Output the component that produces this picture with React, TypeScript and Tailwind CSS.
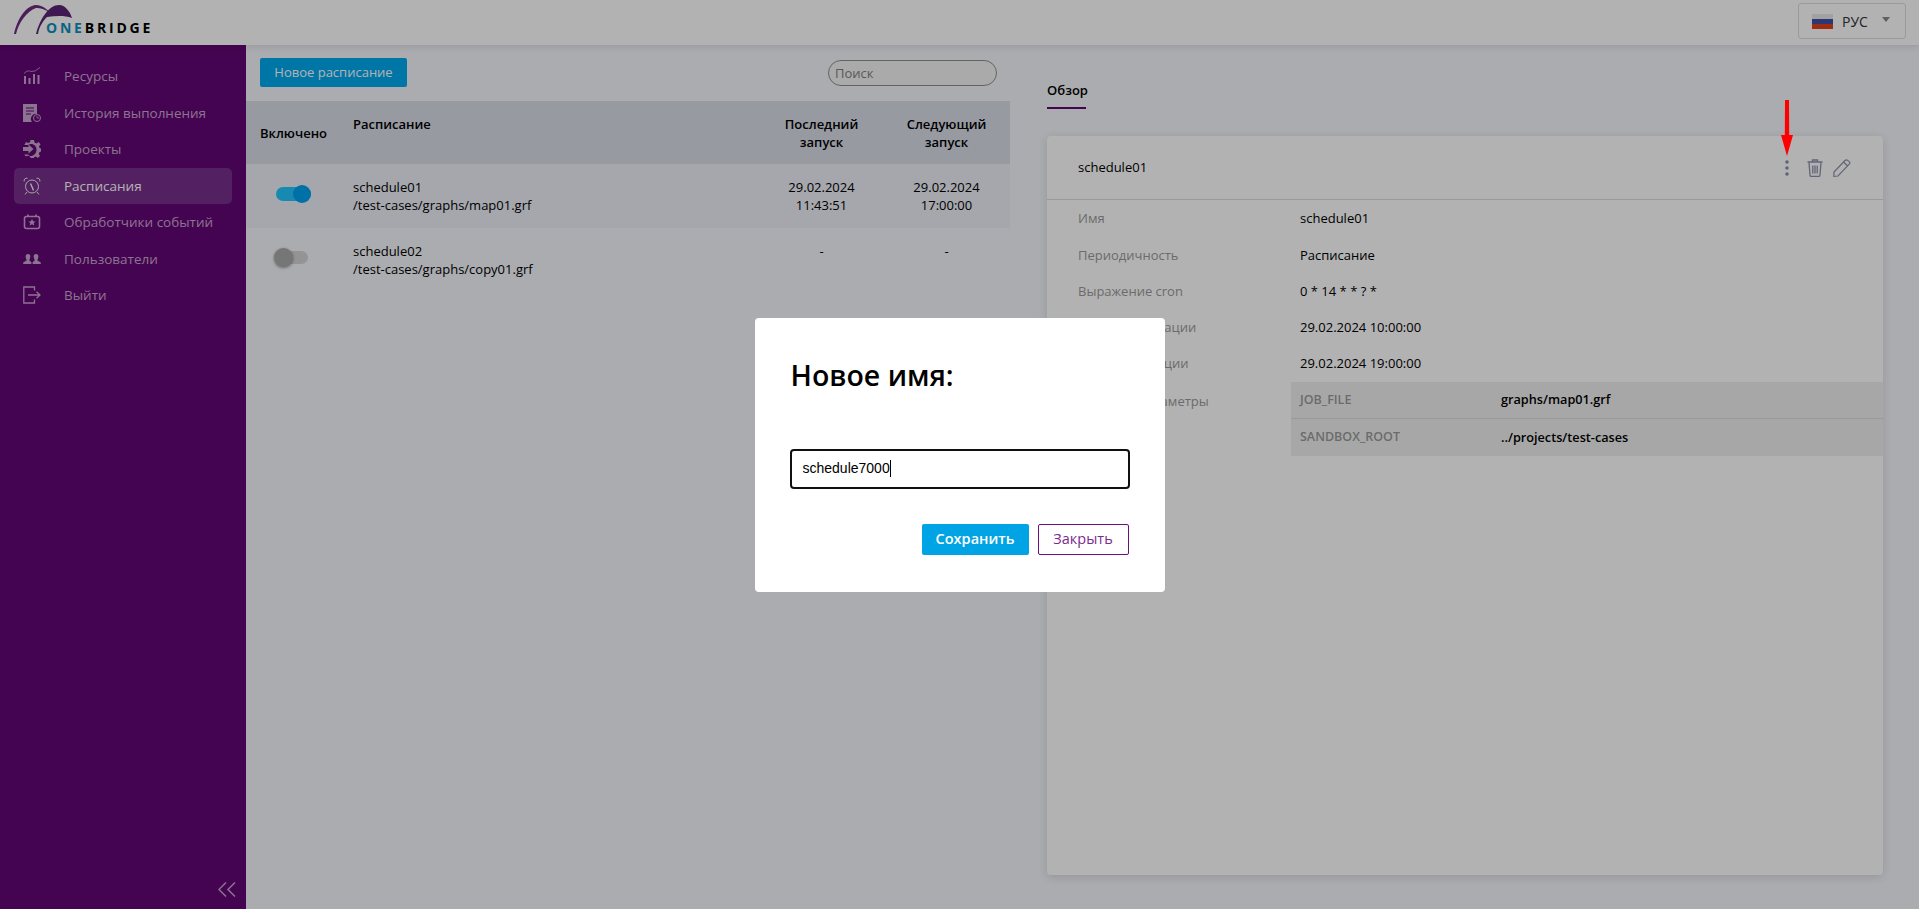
import * as React from "react";

const FONT = "font-['Open_Sans','Noto_Sans',sans-serif]";

function Logo() {
  return (
    <div className="relative h-[45px] w-[170px]">
      <svg viewBox="0 0 170 45" className="absolute inset-0 h-full w-full">
        <path d="M14 34 C17 20 25 6 36 5 C42 5 47 9 50 13 C45 9 40 8 36 8 C27 11 19 22 16 34Z" fill="#6c2a80" />
        <path d="M36 34 C40 18 50 4 60 5 C66 6 70 12 72 18 C64 15 55 16 47 17 C43 21 39 27 38 34Z" fill="#5c2478" />
      </svg>
      <div className="absolute left-[46px] top-[18px] text-[14px] leading-[20px] font-bold tracking-[2.8px] text-black">
        <span className="text-[#0e8fc0]">ONE</span>BRIDGE
      </div>
    </div>
  );
}

function IconResources() {
  return (
    <svg viewBox="0 0 18 18" className="h-[18px] w-[18px]" fill="currentColor">
      <path d="M1 6.5 C4 3.5 6 3.5 8 4.5 L12 4 L17 0.5" fill="none" stroke="currentColor" strokeWidth="0.8" />
      <rect x="1" y="9" width="2" height="8" />
      <rect x="5.5" y="11" width="2" height="6" />
      <rect x="10" y="7" width="2" height="10" />
      <rect x="14.5" y="8" width="2" height="9" />
    </svg>
  );
}

function IconHistory() {
  return (
    <svg viewBox="0 0 18 18" className="h-[18px] w-[18px]">
      <path d="M0 0 H14 V10 A5 5 0 0 0 9 18 H0Z" fill="currentColor" />
      <path d="M3 4 H11 M3 7 H11 M3 10 H8" stroke="#640674" strokeWidth="1.2" />
      <circle cx="14" cy="14" r="3.5" fill="none" stroke="currentColor" strokeWidth="1" />
      <path d="M14 12 V14 H16" fill="none" stroke="currentColor" strokeWidth="0.8" />
    </svg>
  );
}

function IconProjects() {
  return (
    <svg viewBox="0 0 18 18" className="h-[18px] w-[18px]">
      <path
        d="M7.5 0 H11 L11.5 2.5 L13.5 3.4 L15.7 2 L17.6 4.4 L16 6.2 L16.6 8 L18 8.6 V11.6 L16.4 12.2 L15.8 14 L17 16 L14.8 18 L13 16.6 L11.2 17.2 L10.8 18 H7.5 L7 16.4 L5 15.4 L3 16.6 L1.2 14.6 H5 L7 16 C10 16.5 13.5 14 13.5 9.5 C13.5 6 10.5 3.5 7.5 4 L5 5 H1.4 L3 2 L5 3 L7 2.2Z"
        fill="currentColor"
      />
      <path d="M0 7 H5.5 V4.5 L10.5 9 L5.5 13.5 V11 H0Z" fill="currentColor" />
    </svg>
  );
}

function IconAlarm() {
  return (
    <svg viewBox="0 0 18 18" className="h-[18px] w-[18px]" fill="none" stroke="currentColor" strokeWidth="0.9">
      <circle cx="9" cy="9.5" r="6.5" />
      <path d="M1.2 4.5 C0.6 2.5 2 0.8 4.5 1.2 M16.8 4.5 C17.4 2.5 16 0.8 13.5 1.2 M4 15 L2 17.5 M14 15 L16 17.5" />
      <path d="M7.5 6.5 L9.5 11 L10.5 13.5" strokeWidth="1.3" />
    </svg>
  );
}

function IconEvents() {
  return (
    <svg viewBox="0 0 18 18" className="h-[18px] w-[18px]">
      <rect x="1.5" y="3.5" width="15" height="12" rx="2" fill="none" stroke="currentColor" strokeWidth="1.6" />
      <path d="M5 1.5 V4 M13 1.5 V4" stroke="currentColor" strokeWidth="1.6" />
      <path d="M9 5.8 L10.1 8.2 L12.6 8.4 L10.7 10.1 L11.3 12.6 L9 11.3 L6.7 12.6 L7.3 10.1 L5.4 8.4 L7.9 8.2Z" fill="currentColor" />
    </svg>
  );
}

function IconUsers() {
  return (
    <svg viewBox="0 0 18 18" className="h-[18px] w-[18px]" fill="currentColor">
      <path d="M5 4 C7 4 7.6 5.6 7.2 7.4 C7 8.6 6.4 9.6 6.2 10.2 L8.4 12.2 V14 H0.2 V12.6 L3.8 10.2 C3.4 9.4 2.9 8.6 2.7 7.4 C2.4 5.6 3 4 5 4Z" />
      <path d="M13 4 C15 4 15.6 5.6 15.3 7.4 C15.1 8.6 14.6 9.4 14.2 10.2 L17.8 12.6 V14 H9.6 V12.2 L11.8 10.2 C11.6 9.6 11 8.6 10.8 7.4 C10.4 5.6 11 4 13 4Z" />
    </svg>
  );
}

function IconExit() {
  return (
    <svg viewBox="0 0 18 18" className="h-[18px] w-[18px]" fill="none" stroke="currentColor" strokeWidth="1.3">
      <path d="M11.5 4.5 V1 H0.8 V17 H11.5 V13.5" />
      <path d="M5 9 H16.5 M13.5 5.8 L17 9 L13.5 12.2" />
    </svg>
  );
}

const NAV = [
  { label: "Ресурсы", icon: IconResources },
  { label: "История выполнения", icon: IconHistory },
  { label: "Проекты", icon: IconProjects },
  { label: "Расписания", icon: IconAlarm, active: true },
  { label: "Обработчики событий", icon: IconEvents },
  { label: "Пользователи", icon: IconUsers },
  { label: "Выйти", icon: IconExit },
];

function Sidebar() {
  return (
    <aside className="flex w-[246px] shrink-0 flex-col bg-[#640674] px-[14px] pt-[13px] pb-[12px]">
      <nav className="flex flex-col">
        {NAV.map((item) => {
          const Icon = item.icon;
          return (
            <div
              key={item.label}
              className={
                item.active
                  ? "flex h-[36.5px] items-center rounded-[5px] bg-[#772e8b] pl-[9px] text-white"
                  : "flex h-[36.5px] items-center pl-[9px] text-[#c8a6cf]"
              }
            >
              <Icon />
              <span className="ml-[23px] text-[13.5px]">{item.label}</span>
            </div>
          );
        })}
      </nav>
      <div className="mt-auto flex justify-end">
        <svg viewBox="0 0 18 15" className="mr-[-4px] h-[15px] w-[18px] text-[#c8a6cf]" fill="none" stroke="currentColor" strokeWidth="1.5">
          <path d="M8 0.5 L1 7.5 L8 14.5 M17 0.5 L10 7.5 L17 14.5" />
        </svg>
      </div>
    </aside>
  );
}

function Toggle({ on }: { on: boolean }) {
  if (on) {
    return (
      <div className="relative ml-[16px] h-[18px] w-[35px]">
        <div className="absolute inset-x-0 top-[2px] h-[14px] rounded-full bg-[#22c6ff]" />
        <div className="absolute right-0 top-0 h-[18px] w-[18px] rounded-full bg-[#00a2ee]" />
      </div>
    );
  }
  return (
    <div className="relative ml-[13px] h-[19px] w-[36px]">
      <div className="absolute inset-x-[2px] top-[3px] h-[13px] rounded-full bg-[#d4d4d4]" />
      <div className="absolute left-0 top-0 h-[19px] w-[19px] rounded-full bg-[#aaaaaa] shadow-[0_1px_3px_rgba(0,0,0,0.4)]" />
    </div>
  );
}

function ScheduleRow(props: {
  on: boolean;
  name: string;
  path: string;
  last: string[];
  next: string[];
  shaded?: boolean;
}) {
  return (
    <div className={props.shaded ? "flex h-[64px] bg-[#ecEFf7] text-[13px] leading-[18px] text-black" : "flex h-[64px] text-[13px] leading-[18px] text-black"}>
      <div className={props.on ? "w-[107px] pt-[21px]" : "w-[107px] pt-[20px]"}>
        <div className={props.on ? "ml-[14px]" : "ml-[14px] pl-[1px]"}>
          <Toggle on={props.on} />
        </div>
      </div>
      <div className="flex-1 pt-[14px]">
        <div>{props.name}</div>
        <div>{props.path}</div>
      </div>
      <div className="w-[125px] pt-[14px] text-center">
        {props.last.map((l) => (
          <div key={l}>{l}</div>
        ))}
      </div>
      <div className="mr-[1px] w-[125px] pt-[14px] text-center">
        {props.next.map((l) => (
          <div key={l}>{l}</div>
        ))}
      </div>
    </div>
  );
}

function ScheduleList() {
  return (
    <section className="w-[764px] shrink-0">
      <div className="flex h-[56px] items-start justify-between pl-[14px] pr-[13px] pt-[13px]">
        <button type="button" className="h-[29px] w-[147px] rounded-[2px] bg-[#00a9ef] text-[13px] font-medium text-white">
          Новое расписание
        </button>
        <input
          placeholder="Поиск"
          className="mt-[2px] h-[26px] w-[169px] rounded-full border border-[#8f8f8f] bg-[#f4f4f4] px-[6px] text-[13px] outline-none placeholder:text-[#808080]"
        />
      </div>
      <div className="flex h-[63px] bg-[#dadde9] text-[13px] font-semibold leading-[18px] text-black">
        <div className="flex w-[107px] items-center pl-[14px]">Включено</div>
        <div className="flex-1 pt-[14px]">Расписание</div>
        <div className="w-[125px] px-[20px] pt-[14px] text-center">Последний запуск</div>
        <div className="mr-[1px] w-[125px] px-[20px] pt-[14px] text-center">Следующий запуск</div>
      </div>
      <ScheduleRow on shaded name="schedule01" path="/test-cases/graphs/map01.grf" last={["29.02.2024", "11:43:51"]} next={["29.02.2024", "17:00:00"]} />
      <ScheduleRow on={false} name="schedule02" path="/test-cases/graphs/copy01.grf" last={["-"]} next={["-"]} />
    </section>
  );
}

const DETAILS = [
  { label: "Имя", value: "schedule01" },
  { label: "Периодичность", value: "Расписание" },
  { label: "Выражение cron", value: "0 * 14 * * ? *" },
  { label: "Начало активации", value: "29.02.2024 10:00:00" },
  { label: "Конец активации", value: "29.02.2024 19:00:00" },
];

function DetailsPanel() {
  return (
    <section className="flex min-w-0 flex-1 flex-col pl-[37px] pr-[36px] pb-[34px]">
      <div className="mt-[36px] w-[39px] border-b-2 border-[#640674] pb-[8px] text-[13px] font-semibold leading-[18px] text-black">Обзор</div>
      <div className="mt-[27px] flex flex-1 flex-col rounded-[4px] bg-white shadow-[0_2px_10px_rgba(0,0,0,0.12)]">
        <div className="flex h-[64px] shrink-0 items-center justify-between border-b border-[#dcdcdc] pl-[31px] pr-[32px] text-[13px] text-black">
          <span>schedule01</span>
          <div className="flex items-center text-[#8d90ad]">
            <svg viewBox="0 0 4 18" className="h-[18px] w-[4px]" fill="currentColor">
              <circle cx="2" cy="3" r="1.8" />
              <circle cx="2" cy="9" r="1.8" />
              <circle cx="2" cy="15" r="1.8" />
            </svg>
            <svg viewBox="0 0 16 18" className="ml-[18px] h-[18px] w-[16px]" fill="none" stroke="currentColor" strokeWidth="1.3">
              <path d="M0.5 3 H15.5 M5.5 3 V1 H10.5 V3" />
              <path d="M2 3.5 L3 16 C3 17 3.6 17.5 4.5 17.5 H11.5 C12.4 17.5 13 17 13 16 L14 3.5" />
              <path d="M5.8 6.5 V14.5 M8 6.5 V14.5 M10.2 6.5 V14.5" />
            </svg>
            <svg viewBox="0 0 18 18" className="ml-[10px] h-[18px] w-[18px]" fill="none" stroke="currentColor" strokeWidth="1.2">
              <path d="M1 13 L12 1.5 C13 0.6 14 0.8 15 1.6 L16.2 2.6 C17 3.4 17 4.4 16.2 5.2 L5 17 L0.8 17.3Z" />
              <path d="M10.5 3 L14.7 7" />
            </svg>
          </div>
        </div>
        <div className="pt-[1px]">
          {DETAILS.map((row) => (
            <div key={row.label} className="flex h-[36.2px] items-center text-[13px]">
              <div className="w-[253px] shrink-0 pl-[31px] text-[#9a9a9a]">{row.label}</div>
              <div className="text-black">{row.value}</div>
            </div>
          ))}
          <div className="flex text-[13px]">
            <div className="w-[244px] shrink-0 pl-[31px] pt-[10px] text-[#9a9a9a]">Входные параметры</div>
            <div className="flex-1 bg-[#f0f0f0]">
              <div className="flex h-[37px] items-center border-b border-[#dcdcdc] pl-[9px]">
                <div className="w-[201px] text-[12.5px] font-semibold text-[#9a9a9a]">JOB_FILE</div>
                <div className="text-[12.7px] font-semibold text-black">graphs/map01.grf</div>
              </div>
              <div className="flex h-[37px] items-center pl-[9px]">
                <div className="w-[201px] text-[12.5px] font-semibold text-[#9a9a9a]">SANDBOX_ROOT</div>
                <div className="text-[12.7px] font-semibold text-black">../projects/test-cases</div>
              </div>
            </div>
          </div>
        </div>
      </div>
    </section>
  );
}

function RenameDialog() {
  return (
    <div className="fixed inset-0 z-20 flex items-center justify-center bg-black/30">
      <div className="flex h-[274px] w-[410px] flex-col rounded-[4px] bg-white pl-[36px] pr-[35px]">
        <h2 className="mt-[38px] text-[28.5px] font-semibold leading-[38px] text-black">Новое имя:</h2>
        <div className="ml-[-1px] mt-[55px] flex h-[40px] w-[340px] items-center rounded-[4px] border-2 border-[#101010] pl-[11px] font-['Liberation_Sans',sans-serif] text-[14px] text-black">
          schedule7000
          <span className="inline-block h-[17px] w-px bg-black" />
        </div>
        <div className="mt-[35px] mr-[1px] flex justify-end gap-[9px]">
          <button type="button" className="h-[31px] w-[107px] rounded-[2px] bg-[#00a4e4] text-[14.5px] font-semibold text-white">
            Сохранить
          </button>
          <button type="button" className="h-[31px] w-[91px] rounded-[2px] border border-[#6a0f80] text-[14.5px] text-[#7b2a90]">
            Закрыть
          </button>
        </div>
      </div>
    </div>
  );
}

export default function App() {
  return (
    <div className={`relative flex h-[909px] flex-col overflow-hidden bg-[#f5f6fb] ${FONT}`}>
      <header className="z-10 flex h-[45px] shrink-0 items-center justify-between bg-white pr-[13px] shadow-[0_2px_6px_rgba(0,0,0,0.1)]">
        <Logo />
        <div className="mt-[-3px] flex h-[36px] w-[108px] items-center rounded-[3px] border border-[#dddddd] pl-[13px] text-[#333]">
          <div className="flex h-[15px] w-[21px] flex-col">
            <div className="flex-1 bg-[#e8e8e8]" />
            <div className="flex-1 bg-[#3f4fa8]" />
            <div className="flex-1 bg-[#e0401a]" />
          </div>
          <span className="ml-[9px] text-[14px]">РУС</span>
          <span className="ml-[14px] mt-[-4px] h-0 w-0 border-x-[4px] border-t-[5px] border-x-transparent border-t-[#888]" />
        </div>
      </header>
      <div className="flex min-h-0 flex-1">
        <Sidebar />
        <ScheduleList />
        <DetailsPanel />
      </div>
      <RenameDialog />
      <svg viewBox="0 0 14 56" className="absolute left-[1780px] top-[100px] z-30 h-[56px] w-[14px]" fill="#ff0000">
        <path d="M5 0 H9 L9.2 35 H13 L7 56 L1 35 H4.8Z" />
      </svg>
    </div>
  );
}
